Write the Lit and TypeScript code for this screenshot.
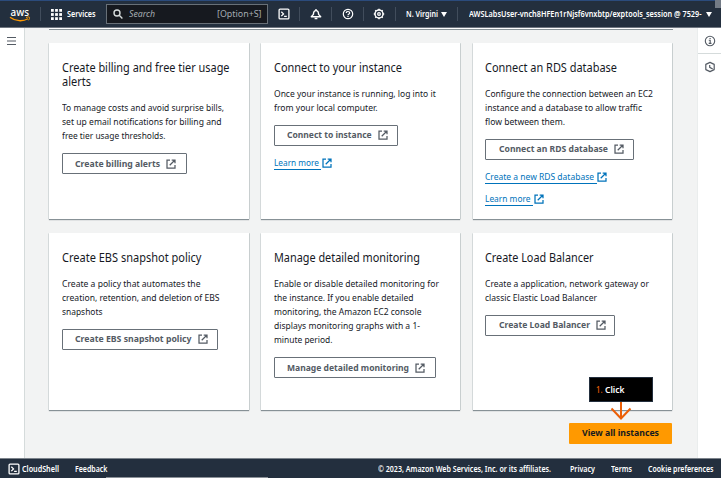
import { LitElement, html, css, svg } from "lit";
import { customElement, property } from "lit/decorators.js";
import { styleMap } from "lit/directives/style-map.js";

/** A single line of text condensed or widened to a given measure. */
@customElement("text-line")
class TextLine extends LitElement {
  @property({ type: Number }) w = 0;
  @property() text = "";
  static styles = css`
    :host { display: block; white-space: nowrap; flex: none; }
    .t { display: inline-block; transform-origin: 0 50%; vertical-align: top; }
  `;
  render() {
    return html`<span class="t">${this.text}</span>`;
  }
  updated() {
    const t = this.renderRoot.querySelector<HTMLElement>(".t")!;
    t.style.transform = "none";
    const natural = t.getBoundingClientRect().width;
    this.style.width = `${this.w}px`;
    if (natural) t.style.transform = `scaleX(${this.w / natural})`;
  }
}

type Line = [string, number];
interface Card {
  title: Line[];
  body: Line[];
  button: Line;
  buttonWidth: number;
  links?: Line[];
}

const cards: Card[] = [
  {
    title: [["Create billing and free tier usage", 167.5], ["alerts", 29]],
    body: [
      ["To manage costs and avoid surprise bills,", 162],
      ["set up email notifications for billing and", 159.5],
      ["free tier usage thresholds.", 103.5],
    ],
    button: ["Create billing alerts", 85],
    buttonWidth: 125,
  },
  {
    title: [["Connect to your instance", 128]],
    body: [
      ["Once your instance is running, log into it", 161.7],
      ["from your local computer.", 103.5],
    ],
    button: ["Connect to instance", 84.7],
    buttonWidth: 124,
    links: [["Learn more", 45]],
  },
  {
    title: [["Connect an RDS database", 132]],
    body: [
      ["Configure the connection between an EC2", 168],
      ["instance and a database to allow traffic", 157],
      ["flow between them.", 80],
    ],
    button: ["Connect an RDS database", 109],
    buttonWidth: 149,
    links: [["Create a new RDS database", 109], ["Learn more", 45.5]],
  },
  {
    title: [["Create EBS snapshot policy", 139.5]],
    body: [
      ["Create a policy that automates the", 138.5],
      ["creation, retention, and deletion of EBS", 157.5],
      ["snapshots", 40.5],
    ],
    button: ["Create EBS snapshot policy", 116.5],
    buttonWidth: 156,
  },
  {
    title: [["Manage detailed monitoring", 146]],
    body: [
      ["Enable or disable detailed monitoring for", 165],
      ["the instance. If you enable detailed", 139.5],
      ["monitoring, the Amazon EC2 console", 147.5],
      ["displays monitoring graphs with a 1-", 146],
      ["minute period.", 58.5],
    ],
    button: ["Manage detailed monitoring", 122],
    buttonWidth: 162,
  },
  {
    title: [["Create Load Balancer", 108.5]],
    body: [
      ["Create a application, network gateway or", 164],
      ["classic Elastic Load Balancer", 112],
    ],
    button: ["Create Load Balancer", 91],
    buttonWidth: 130,
  },
];

const line = ([text, w]: Line, cls = "") =>
  html`<text-line class=${cls} .text=${text} .w=${w}></text-line>`;

const external = html`<svg class="ext" viewBox="0 0 10 10" fill="none" stroke="currentColor" stroke-width="1.25">
  <path d="M4 1H1v8h8V6M5.7 1H9v3.3M9 1 3.7 6.3" />
</svg>`;
const shell = html`<svg class="ic" viewBox="0 0 12 12" fill="none" stroke="currentColor" stroke-width="1.3">
  <rect x="1.1" y="1.1" width="9.8" height="9.8" rx="1" />
  <path d="M3.3 3.7 5.5 5.9 3.3 8.1M6.1 8.3h2.7" />
</svg>`;
const bell = html`<svg class="ic" viewBox="0 0 12 12" fill="none" stroke="currentColor" stroke-width="1.4">
  <path d="M1.3 8.700 3.400 6.400C3.500 4 4.300 2.600 6 2.600S8.500 4 8.600 6.400L10.700 8.700Z" stroke-linejoin="round" />
  <path d="M6 1v1.500M4.600 10.500h2.800" />
</svg>`;
const help = html`<svg class="ic" viewBox="0 0 12 12" fill="none" stroke="currentColor" stroke-width="1.2">
  <circle cx="6" cy="6" r="4.700" />
  <path d="M4.300 4.900C4.300 3 7.700 3 7.700 4.900 7.700 6 6 5.900 6 7.200M6 7.900v1.200" />
</svg>`;
const gearTeeth = Array.from({ length: 8 }, (_, i) =>
  svg`<path d="M6 .8v1.200" transform="rotate(${i * 45} 6 6)" />`);
const gear = html`<svg class="ic" viewBox="0 0 12 12" fill="none" stroke="currentColor" stroke-width="1.500">
  <circle cx="6" cy="6" r="4" /><circle cx="6" cy="6" r="1.300" stroke-width="1.300" />${gearTeeth}
</svg>`;
const info = html`<svg class="side-ic" viewBox="0 0 12 12" fill="none" stroke="currentColor" stroke-width="1.100">
  <circle cx="6" cy="6" r="4.700" /><path d="M4.800 5.300H6.200V8.300M4.700 8.400h2.800M5.500 3.500h1.200" />
</svg>`;
const hexClock = html`<svg class="side-ic" viewBox="0 0 12 12" fill="none" stroke="currentColor" stroke-width="1.200">
  <path d="M6 1.400 10.200 3.400V8.600L6 10.600 1.800 8.600V3.400Z" stroke-linejoin="round" />
  <path d="M5.700 4v2.300l3 1.700" />
</svg>`;
const dots = [0, 4, 8].flatMap((y) => [0, 4, 8].map((x) => svg`<rect x=${x} y=${y} width="2.700" height="2.700" />`));

@customElement("app-root")
class AppRoot extends LitElement {
  static styles = css`
    :host {
      display: grid; grid-template-rows: 28px 430px 20px; width: 721px; height: 478px;
      overflow: hidden; position: relative; box-sizing: border-box;
      font: 9.500px/14.200px "Noto Sans", "Open Sans", sans-serif; color: #16191f; background: #f2f3f3;
    }
    * { box-sizing: border-box; }
    svg { display: block; flex: none; }
    .top {
      display: flex; align-items: center; background: #232f3e; color: #fff;
      border-top: 1px solid #2b4b7c; border-bottom: 1px solid #6f7680; padding-left: 10px;
      font-size: 8.200px; font-weight: 600; line-height: 12px; position: relative;
    }
    .corner { position: absolute; right: 0; top: -1px; width: 6px; height: 8px; background: #737b86; }
    .aws { width: 21px; height: 17px; overflow: visible; }
    .aws-word { font: 500 11px "Noto Sans", sans-serif; fill: #fff; }
    .rule { width: 1px; height: 14px; background: #414d5c; flex: none; }
    .r0 { margin: 0 10px 0 9px; }
    .grid { width: 11px; height: 11px; margin-right: 5px; fill: #fff; }
    .search {
      width: 162px; height: 20px; margin-left: 10.500px; padding: 0 6px; flex: none; display: flex; align-items: center;
      background: #16191f; border: 1px solid #687078; color: #a5acb2; font-size: 9.300px; font-weight: 400;
    }
    .lens { width: 10px; height: 10px; margin-right: 5.500px; color: #d5dbdb; }
    .ital { font-style: italic; }
    .key { margin-left: auto; }
    .tools { display: flex; align-items: center; margin-left: 10px; }
    .ic { width: 12px; height: 12px; }
    .tools .rule { margin: 0 9.400px; }
    .tri { width: 6px; height: 5px; fill: currentColor; }
    .region { margin: 0 3.500px 0 .5px; }
    .tools .wide { margin: 0 11px 0 10px; }
    .user { margin-right: 4.500px; }
    .mid { display: grid; grid-template-columns: 25px 1fr 24px; }
    .left { background: #fff; border-right: 1px solid #d5dbdb; padding: 9px 0 0 7px; }
    .menu { width: 9px; height: 8px; stroke: #545b64; }
    .right { background: #fff; border-left: 1px solid #eaeded; color: #545b64; }
    .cell { height: 26px; display: grid; place-items: center; border-bottom: 1px solid #d5dbdb; }
    .cell.last { border: 0; }
    .side-ic { width: 12px; height: 12px; }
    .main { padding: 0 24px; }
    .above { height: 2px; background: #fff; border-bottom: 1px solid #879196; margin-bottom: 13px; width: 624px; }
    .cards { display: grid; grid-template-columns: 199.500px 199.500px 199.500px; grid-auto-rows: 176px; gap: 14px 12.300px; }
    .card {
      background: #fff; padding: 18px 12px 0 12.900px;
      box-shadow: 0 1px 1px #879196, 1px 0 0 #d5dbdb, -1px 0 0 #e4e8e8;
    }
    .card:nth-child(n + 4) { height: 177px; }
    .title { font-size: 12.200px; margin-bottom: 11.400px; }
    .body { margin-bottom: 9.600px; }
    .btn {
      height: 21px; border: 1px solid #687078; border-radius: 1px; padding-left: 12.200px; display: flex;
      align-items: center; gap: 6px; color: #545b64; font-weight: 700; font-size: 9.300px; margin-bottom: 10.200px;
    }
    .btn text-line { margin-top: .5px; }
    .ext { width: 10px; height: 10px; }
    .link { display: flex; align-items: center; color: #0073bb; height: 14px; margin-bottom: 8px; }
    .under { border-bottom: 1px solid #0073bb; padding-right: 2.500px; height: 14px; line-height: 14px; margin-right: .5px; }
    .primary {
      width: 103px; height: 21px; margin: 14px 0 0 520px; background: #ff9900; border-radius: 1px;
      display: grid; place-items: center; font-weight: 700; font-size: 9.300px;
    }
    .callout {
      position: absolute; left: 589px; top: 377px; width: 64px; height: 25px; background: #000; border: 1px solid #232f3e;
      color: #fff; display: flex; align-items: center; gap: 2.500px; padding: 1px 0 0 6px; font-size: 9.500px; font-weight: 600;
    }
    .num { color: #eb5f07; font-weight: 500; }
    .arrow { position: absolute; left: 610px; top: 402px; width: 22px; height: 18px; }
    .foot {
      background: #232f3e; border-top: 1px solid #7c838b; color: #fff; display: flex; align-items: center;
      padding: 0 8px 0; font-size: 8px; font-weight: 600; line-height: 12px; position: relative;
    }
    .foot .ic { margin-right: 2px; }
    .feed { margin-left: 16px; }
    .copy { margin-left: auto; }
    .p { margin-left: 19px; }
    .q { margin-left: 16px; }
    .edge { position: absolute; left: 106px; bottom: 0; width: 162px; height: 1px; background: #8b9198; }
  `;

  card(c: Card) {
    return html`<section class="card">
      <div class="title">${c.title.map((l) => line(l))}</div>
      <div class="body">${c.body.map((l) => line(l))}</div>
      <div class="btn" style=${styleMap({ width: `${c.buttonWidth}px` })}>${line(c.button)}${external}</div>
      ${c.links?.map((l) => html`<div class="link"><span class="under">${line(l)}</span>${external}</div>`)}
    </section>`;
  }

  render() {
    const tri = html`<svg class="tri" viewBox="0 0 6 5"><path d="M0 0h6L3 5Z" /></svg>`;
    return html`
      <header class="top">
        <svg class="aws" viewBox="0 0 21 17">
          <text class="aws-word" x=".5" y="9.500" textLength="18.500" lengthAdjust="spacingAndGlyphs">aws</text>
          <path d="M0 11.300C5.500 15.600 13 15.600 18 12.800" fill="none" stroke="#ff9900" stroke-width="1.300" />
          <path d="M16 11.500c2-.8 3.300-.6 3.500-.2.3.6-.3 2-1 3" fill="none" stroke="#ff9900" stroke-width="1" />
        </svg>
        <i class="rule r0"></i>
        <svg class="grid" viewBox="0 0 10.700 10.700">${dots}</svg>
        ${line(["Services", 28.5])}
        <div class="search">
          <svg class="lens" viewBox="0 0 10 10" fill="none" stroke="currentColor" stroke-width="1.400">
            <circle cx="4" cy="4" r="3" /><path d="m6.200 6.200 3.200 3.200" />
          </svg>
          ${line(["Search", 26], "ital")}${line(["[Option+S]", 44.5], "key")}
        </div>
        <div class="tools">
          ${shell}<i class="rule"></i>${bell}<i class="rule"></i>${help}<i class="rule"></i>${gear}<i class="rule"></i>
          ${line(["N. Virgini", 32], "region")}${tri}<i class="rule wide"></i>
          ${line(["AWSLabsUser-vnch8HFEn1rNjsf6vnxbtp/exptools_session @ 7529-", 232.5], "user")}${tri}
        </div>
        <i class="corner"></i>
      </header>
      <div class="mid">
        <nav class="left">
          <svg class="menu" viewBox="0 0 9 8"><path d="M0 .5h9M0 4h9M0 7.500h9" /></svg>
        </nav>
        <main class="main">
          <div class="above"></div>
          <div class="cards">${cards.map((c) => this.card(c))}</div>
          <div class="primary">${line(["View all instances", 77])}</div>
        </main>
        <aside class="right">
          <div class="cell">${info}</div>
          <div class="cell last">${hexClock}</div>
        </aside>
      </div>
      <footer class="foot">
        ${shell}${line(["CloudShell", 37])}${line(["Feedback", 32.5], "feed")}
        ${line(["© 2023, Amazon Web Services, Inc. or its affiliates.", 173], "copy")}
        ${line(["Privacy", 25], "p")}${line(["Terms", 21], "q")}${line(["Cookie preferences", 65.5], "q")}
        <i class="edge"></i>
      </footer>
      <div class="callout">${line(["1.", 6.5], "num")}${line(["Click", 19.5])}</div>
      <svg class="arrow" viewBox="0 0 22 18" fill="none" stroke="#eb5f07" stroke-width="2">
        <path d="M11 0v16.500M1.500 6.500 11 16.500l9.500-10" />
      </svg>
    `;
  }
}
